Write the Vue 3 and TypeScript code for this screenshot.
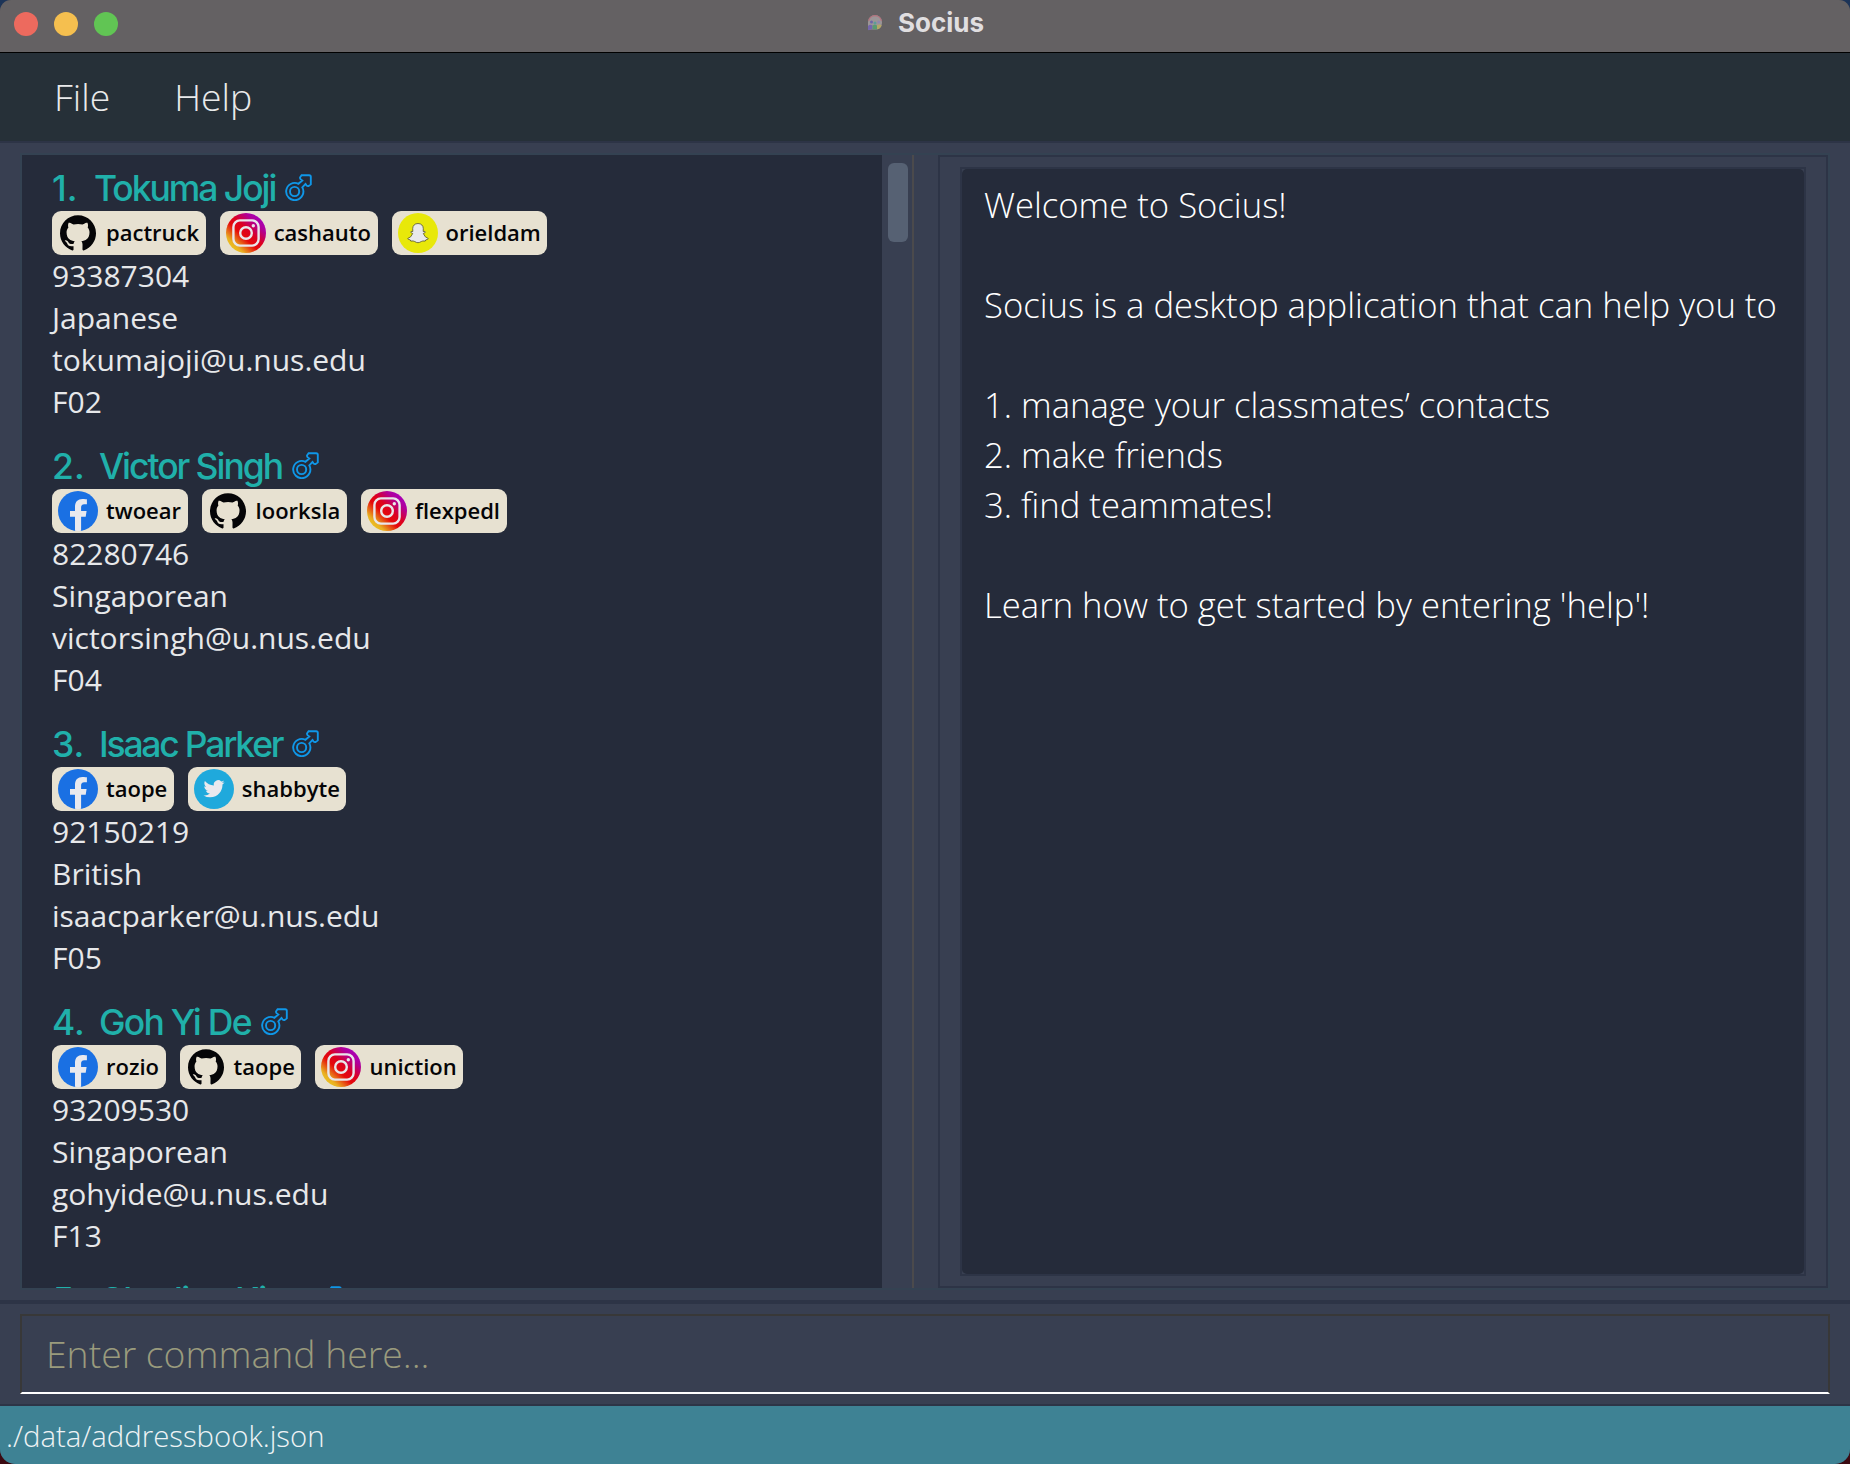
<script setup lang="ts">
type Network = 'github' | 'instagram' | 'snapchat' | 'facebook' | 'twitter'

interface Social {
  network: Network
  handle: string
}

interface Contact {
  name: string
  tracking: number
  socials: Social[]
  details: string[]
}

const contacts: Contact[] = [
  {
    name: 'Tokuma Joji',
    tracking: -2.05,
    socials: [
      { network: 'github', handle: 'pactruck' },
      { network: 'instagram', handle: 'cashauto' },
      { network: 'snapchat', handle: 'orieldam' },
    ],
    details: ['93387304', 'Japanese', 'tokumajoji@u.nus.edu', 'F02'],
  },
  {
    name: 'Victor Singh',
    tracking: -2.05,
    socials: [
      { network: 'facebook', handle: 'twoear' },
      { network: 'github', handle: 'loorksla' },
      { network: 'instagram', handle: 'flexpedl' },
    ],
    details: ['82280746', 'Singaporean', 'victorsingh@u.nus.edu', 'F04'],
  },
  {
    name: 'Isaac Parker',
    tracking: -2.2,
    socials: [
      { network: 'facebook', handle: 'taope' },
      { network: 'twitter', handle: 'shabbyte' },
    ],
    details: ['92150219', 'British', 'isaacparker@u.nus.edu', 'F05'],
  },
  {
    name: 'Goh Yi De',
    tracking: -1.75,
    socials: [
      { network: 'facebook', handle: 'rozio' },
      { network: 'github', handle: 'taope' },
      { network: 'instagram', handle: 'uniction' },
    ],
    details: ['93209530', 'Singaporean', 'gohyide@u.nus.edu', 'F13'],
  },
  { name: 'Charline King', tracking: -1.7, socials: [], details: [] },
]

const message = `Welcome to Socius!

Socius is a desktop application that can help you to

1. manage your classmates’ contacts
2. make friends
3. find teammates!

Learn how to get started by entering 'help'!`
</script>

<template>
  <div class="window">
    <header class="titlebar">
      <div class="lights">
        <i class="light close" />
        <i class="light minimise" />
        <i class="light zoom" />
      </div>
      <svg class="app-icon" width="14" height="16" viewBox="0 0 14 16">
        <path d="M0 15V7a7 7 0 0 1 14 0c0 4-2 7.500-6 7.500H3z" fill="#9b9597" />
        <path d="M.6 6a6.500 6.500 0 0 1 12.800 0" fill="none" stroke="#b5707c" stroke-width="1.100" />
        <circle cx="3.500" cy="7" r="1.500" fill="#6d65a8" />
        <circle cx="7" cy="8" r="1.500" fill="#5c9c9a" />
        <circle cx="10.700" cy="7" r="1.500" fill="#8f87ae" />
        <path d="M0 15.300V11q2-2.400 4.500-.5V14z" fill="#7566ad" />
        <path d="M4.500 14v-3.500q2.500-1.600 4.500 0v4z" fill="#5a9a70" />
        <path d="M9 14.300v-4q2.500-1.800 4.700 0Q12.500 14 9 14.300z" fill="#b3a667" />
      </svg>
      <span class="app-name">Socius</span>
    </header>

    <nav class="menubar">
      <span>File</span>
      <span>Help</span>
    </nav>

    <main class="split">
      <section class="list-pane">
        <article v-for="(contact, i) in contacts" :key="contact.name" class="card">
          <div class="name-row">
            <span class="index">{{ i + 1 }}.</span>
            <span class="name" :style="{ letterSpacing: `${contact.tracking}px` }">{{ contact.name }}</span>
            <svg class="gender" width="27" height="27" viewBox="0 0 27 27">
              <path
                d="M13.500 9.800 17.300 6.500 15.800 5.400Q14.800 4.400 15.100 3.300L16.600 1.200H24.200Q25.800 1.200 25.800 2.800V10.400L23.700 12Q22.400 12.400 21.500 11.300L20.500 9.900 17.300 13.400A8.600 8.600 0 1 1 13.500 9.800Z"
              />
              <circle cx="9.600" cy="17.500" r="4.600" />
            </svg>
          </div>
          <div class="socials">
            <span v-for="social in contact.socials" :key="social.network" class="chip">
              <svg v-if="social.network === 'github'" width="40" height="40" viewBox="0 0 40 40">
                <path
                  transform="translate(2 2.300) scale(2.250)"
                  fill="#050507"
                  d="M8 0C3.580 0 0 3.580 0 8c0 3.540 2.290 6.530 5.470 7.590.4.070.55-.17.55-.38 0-.19-.01-.82-.01-1.490-2.010.37-2.530-.49-2.690-.94-.09-.23-.48-.94-.82-1.130-.28-.15-.68-.52-.01-.53.63-.01 1.080.58 1.230.82.72 1.210 1.870.87 2.330.66.07-.52.28-.87.51-1.070-1.780-.2-3.640-.89-3.640-3.950 0-.87.31-1.590.82-2.150-.08-.2-.36-1.020.08-2.120 0 0 .67-.21 2.200.82.64-.18 1.320-.27 2-.27s1.360.09 2 .27c1.530-1.040 2.200-.82 2.200-.82.44 1.100.16 1.920.08 2.120.51.56.82 1.270.82 2.150 0 3.070-1.870 3.750-3.650 3.950.29.25.54.73.54 1.480 0 1.070-.01 1.930-.01 2.200 0 .21.15.46.55.38A8.010 8.010 0 0 0 16 8c0-4.420-3.580-8-8-8z"
                />
              </svg>
              <svg v-else-if="social.network === 'instagram'" width="40" height="40" viewBox="0 0 40 40">
                <defs>
                  <linearGradient :id="`ig-${i}`" x1=".1" y1=".9" x2=".85" y2=".12">
                    <stop offset="0" stop-color="#ecc81f" />
                    <stop offset=".15" stop-color="#e9b022" />
                    <stop offset=".42" stop-color="#e50a0a" />
                    <stop offset=".6" stop-color="#dc0020" />
                    <stop offset=".85" stop-color="#b0009a" />
                    <stop offset="1" stop-color="#a800b8" />
                  </linearGradient>
                </defs>
                <circle cx="20" cy="20" r="20" :fill="`url(#ig-${i})`" />
                <g fill="none" stroke="#e9e6ea" stroke-width="2.400">
                  <rect x="7.400" y="7.400" width="25.200" height="25.200" rx="6.500" />
                  <circle cx="20" cy="20" r="5.800" />
                </g>
                <circle cx="27.300" cy="12.700" r="1.700" fill="#e9e6ea" />
              </svg>
              <svg v-else-if="social.network === 'snapchat'" width="40" height="40" viewBox="0 0 40 40">
                <circle cx="20" cy="20" r="20" fill="#e8e80a" />
                <path
                  fill="#e9e9ec"
                  stroke="#55552a"
                  stroke-width=".8"
                  stroke-linejoin="round"
                  d="M20 10.500C23.400 10.500 25.300 12.800 25.300 15.600L25.200 18.500Q27.500 18 27.500 19Q27.400 19.800 25.300 20.500Q26.800 24.500 30.300 25.500Q30.500 26.400 27.800 26.900L27.200 28.100Q24.700 27.600 23.300 28.500Q21.500 29.700 20 29.700T16.700 28.500Q15.300 27.600 12.800 28.100L12.200 26.900Q9.500 26.400 9.700 25.500Q13.200 24.500 14.700 20.500Q12.600 19.800 12.500 19Q12.500 18 14.800 18.500L14.700 15.600C14.700 12.800 16.600 10.500 20 10.500Z"
                />
              </svg>
              <svg v-else-if="social.network === 'facebook'" width="40" height="40" viewBox="0 0 40 40">
                <circle cx="20" cy="20" r="20" fill="#1a70e3" />
                <path
                  fill="#e9e9ee"
                  d="M17 39.800V25.800H12V20H17V15.600C17 10.700 19.900 7.900 24.400 7.900 26.500 7.900 28.900 8.300 28.900 8.300V13.200H26.300C23.900 13.200 23.100 14.700 23.100 16.300V20H28.600L27.700 25.800H23.100V39.800Q20 40.200 17 39.800Z"
                />
              </svg>
              <svg v-else width="40" height="40" viewBox="0 0 40 40">
                <circle cx="20" cy="20" r="20" fill="#1fa9dc" />
                <path
                  transform="translate(9.500 9.200) scale(.88)"
                  fill="#e9e9ee"
                  d="M23.950 4.570a10 10 0 0 1-2.820.77 4.960 4.960 0 0 0 2.160-2.720c-.95.550-2 .950-3.130 1.180a4.920 4.920 0 0 0-8.380 4.480C7.690 8.100 4.070 6.130 1.640 3.160a4.820 4.820 0 0 0-.67 2.480c0 1.710.87 3.210 2.190 4.100a4.900 4.900 0 0 1-2.230-.62v.06a4.920 4.920 0 0 0 3.950 4.830 5 5 0 0 1-2.210.08 4.940 4.940 0 0 0 4.600 3.420A9.870 9.870 0 0 1 0 19.540a13.990 13.990 0 0 0 7.560 2.210c9.050 0 14-7.500 14-13.980 0-.21 0-.42-.02-.63a9.940 9.940 0 0 0 2.410-2.570z"
                />
              </svg>
              <span class="handle">{{ social.handle }}</span>
            </span>
          </div>
          <div v-for="line in contact.details" :key="line" class="detail">{{ line }}</div>
        </article>
      </section>

      <div class="scrollbar"><i class="thumb" /></div>
      <div class="divider" />

      <section class="result-pane">
        <div class="result-frame">
          <div class="result">{{ message }}</div>
        </div>
      </section>
    </main>

    <section class="command">
      <input class="command-box" type="text" placeholder="Enter command here..." />
    </section>

    <footer class="status">./data/addressbook.json</footer>
  </div>
</template>

<style>
html,
body {
  margin: 0;
  background: linear-gradient(#1c3458 0 50%, #3c0a12 50%);
}
</style>

<style scoped>
.window {
  width: 1850px;
  height: 1464px;
  box-sizing: border-box;
  display: flex;
  flex-direction: column;
  overflow: hidden;
  border-radius: 11px 11px 15px 15px;
  background: #383f51;
  font-family: 'Open Sans', 'Noto Sans', sans-serif;
}

.titlebar {
  flex: none;
  height: 53px;
  box-sizing: border-box;
  display: grid;
  grid-template-columns: 1fr auto auto 1fr;
  align-items: center;
  background: #646163;
  border-bottom: 1px solid #000;
}
.lights {
  display: flex;
  gap: 16px;
  padding: 0 0 4px 14px;
}
.light {
  width: 24px;
  height: 24px;
  border-radius: 50%;
}
.close { background: #ed6a5e; }
.minimise { background: #f5bf4f; }
.zoom { background: #61c554; }
.app-icon {
  margin: 0 16px 6px 2px;
}
.app-name {
  padding-bottom: 7px;
  color: #e0dee0;
  font: 700 26px Inter, sans-serif;
}

.menubar {
  flex: none;
  height: 90px;
  box-sizing: border-box;
  display: flex;
  align-items: center;
  gap: 64px;
  padding: 0 0 2px 54px;
  background: #263038;
  border-bottom: 2px solid #2d3446;
  color: #e9eaeb;
  font-size: 37.330px;
  font-weight: 300;
}

.split {
  flex: none;
  height: 1133px;
  display: flex;
  margin: 10px 20px;
  border: 2px solid #344252;
}
.list-pane {
  width: 860px;
  overflow: hidden;
  background: #252b3a;
}
.card {
  height: 278px;
  box-sizing: border-box;
  padding-left: 30px;
}
.name-row {
  display: flex;
  height: 45px;
  padding-top: 11px;
  color: #20b0aa;
  font: 470 35.500px/45px Inter, sans-serif;
}
.index {
  width: 47px;
}
.card:first-child .index {
  width: 42px;
}
.gender {
  margin: 8px 0 0 10px;
  fill: none;
  stroke: #0f97e8;
  stroke-width: 1.900;
}
.socials {
  display: flex;
  gap: 14px;
}
.chip {
  display: flex;
  align-items: center;
  gap: 8px;
  height: 40px;
  padding: 2px 6.600px 2px 6px;
  border-radius: 9px;
  background: #e7e1d1;
  color: #050507;
  font-size: 22px;
  font-weight: 600;
}
.handle {
  padding-bottom: 2px;
}
.detail {
  height: 42px;
  color: #e7e8ea;
  font-size: 30px;
  line-height: 42px;
}

.scrollbar {
  width: 30px;
  padding: 8px 0 0 6px;
  box-sizing: border-box;
}
.thumb {
  display: block;
  width: 20px;
  height: 79px;
  border-radius: 6px;
  background: #566173;
}
.divider {
  width: 2px;
  margin-right: 24px;
  background: #4b4a4c;
}

.result-pane {
  flex: 1;
  display: flex;
  padding: 10px 20px;
  border: 2px solid #2d3446;
}
.result-frame {
  flex: 1;
  display: flex;
  border: 2px solid #2d3446;
}
.result {
  flex: 1;
  padding: 11px 0 0 22px;
  border-radius: 5px;
  background: #252b3a;
  color: #fff;
  font-size: 34.670px;
  font-weight: 300;
  line-height: 50px;
  white-space: pre;
}

.command {
  flex: none;
  height: 106px;
  box-sizing: border-box;
  padding: 10px 20px;
  border-top: 4px solid #2d3446;
  border-bottom: 2px solid #2d3446;
}
.command-box {
  width: 100%;
  height: 80px;
  box-sizing: border-box;
  padding: 0 0 2px 24px;
  border: 2px solid #383838;
  border-bottom-color: #fff;
  border-radius: 0;
  outline: none;
  background: #383f51;
  color: #fff;
  font: 300 37.330px 'Open Sans', sans-serif;
}
.command-box::placeholder {
  color: #9a9b7d;
  opacity: 1;
}

.status {
  flex: 1;
  display: flex;
  align-items: center;
  padding: 1px 0 0 6px;
  background: #3e8294;
  color: #eef3f5;
  font-size: 29.330px;
  font-weight: 300;
}
</style>
